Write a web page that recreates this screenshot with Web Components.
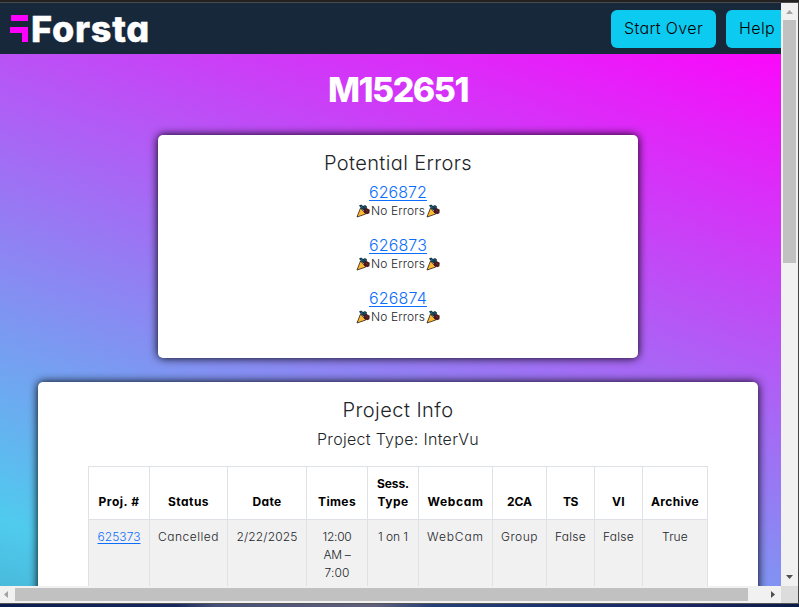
<!DOCTYPE html>
<html lang="en"><head><meta charset="utf-8"><title>Forsta</title>
<style>
html,body{margin:0;height:100%;overflow:hidden}
body{font-family:Inter,"Open Sans",sans-serif;font-feature-settings:"cv11","ss03";color:#212529;background:#222}
</style></head><body>
<app-window></app-window>
<script>
const define=(name,html,init)=>customElements.define(name,class extends HTMLElement{
  connectedCallback(){
    if(this.shadowRoot)return;
    const t=document.createElement('template');t.innerHTML=html;
    this.attachShadow({mode:'open'}).append(t.content.cloneNode(true));
    if(init)init.call(this,this.shadowRoot);
  }
});
/* Text tracked out to a fixed measure. */
define('fit-text',`<style>:host{display:inline-block;white-space:nowrap;text-align:left}span{display:inline-block;white-space:nowrap}:host([underline]) span{text-decoration:underline;text-decoration-thickness:1px;text-underline-offset:2px;text-decoration-skip-ink:none}</style><span></span>`,function(r){
  const s=r.querySelector('span'),txt=this.getAttribute('text'),w=+this.getAttribute('w');
  s.textContent=txt;
  const n=s.getBoundingClientRect().width;
  s.style.letterSpacing=((w-n)/txt.length)+'px';
  this.style.width=w+'px';
});
define('party-icon',`<style>:host{display:inline-block;width:14px;height:14px}svg{display:block}</style>
<svg width="14" height="14" viewBox="0 0 14 14"><path d="M4.5 4 9.8 10 1 13z" fill="#fdb833" stroke="#2b1c12" stroke-width=".8" stroke-linejoin="round"/><path d="M3 1.4 5.2.6 7 2 9 1l2 1.4-.4 2.3L8 6.6 5.4 5z" fill="#153b4c"/><path d="M7.6 5.5 10.5 4l3.2 1.8-.3 3.4-2.4 1L8 8.4z" fill="#48191c"/><path d="M5 2.5l1.4 1M8.6 2.6l.9.7" stroke="#2f7f9b"/><path d="M10 6.4l1.7 1" stroke="#8c2e2b"/></svg>`);
define('forsta-logo',`<style>:host{display:flex;align-items:flex-start;color:#fff}svg{display:block;margin-top:6px}fit-text{font-size:36px;line-height:36px;font-weight:800;margin-left:3px;margin-top:2px;-webkit-text-stroke:.4px #fff}</style>
<svg width="18" height="28" viewBox="0 0 18 28"><path d="M1 0h17v6H1zM0 12h18v15h-6v-9H0z" fill="#f0f"/></svg><fit-text text="Forsta" w="119"></fit-text>`);
define('nav-button',`<style>:host{display:flex;box-sizing:border-box;height:38px;padding:0 13px 2px;align-items:center;border-radius:6px;background:#0dcaf0;color:#000;font-size:16px;font-weight:350;flex:none}</style><slot></slot>`);
define('nav-bar',`<style>:host{display:flex;height:51px;box-sizing:border-box;padding:7px 0 0 10px;background:#17283b;overflow:hidden}forsta-logo{flex:1;margin-top:-1px}nav{display:flex;gap:10px;margin-right:-7px}</style>
<forsta-logo></forsta-logo><nav><nav-button><fit-text text="Start Over" w="79"></fit-text></nav-button><nav-button><fit-text text="Help" w="36"></fit-text></nav-button></nav>`);
define('info-card',`<style>:host{display:block;box-sizing:border-box;background:#fff;border-radius:5px;box-shadow:0 0 10px #000;text-align:center;font-weight:350}h2{margin:0;font-size:20px;line-height:24px;font-weight:350}</style><h2><slot name="title"></slot></h2><slot></slot>`);
define('error-entry',`<style>:host{display:block;height:53px}a{display:block;color:#0d6efd;line-height:20px;height:20px;font-size:16px}a fit-text{height:20px}p{display:flex;justify-content:center;gap:1px;margin:0;height:17px;font-size:12px;line-height:17px}party-icon{margin-top:2px}</style><a></a><p><party-icon></party-icon><fit-text text="No Errors" w="54"></fit-text><party-icon></party-icon></p>`,function(r){
  r.querySelector('a').innerHTML='<fit-text underline w="58" text="'+this.getAttribute('num')+'"></fit-text>';
});
const cols=[['Proj. #',61,41,'625373',43],['Status',78,41,'Cancelled',61],['Date',79,29,'2/22/2025',61],['Times',61,38,'12:00|AM –|7:00','29|27|25'],['Sess.|Type',51,'32|31','1 on 1',30],['Webcam',74,56,'WebCam',57],['2CA',54,25,'Group',37],['TS',48,15,'False',31],['VI',48,13,'False',31],['Archive',65,48,'True',26]];
const lines=(t,w,u='')=>{const ws=String(w).split('|');return t.split('|').map((x,i)=>`<div><fit-text ${u} text="${x}" w="${ws[i]}"></fit-text></div>`).join('')};
define('project-table',`<style>:host{display:block;width:620px}table{border-collapse:collapse;table-layout:fixed;width:620px;font-size:12px;line-height:18px}th,td{border:1px solid #dee2e6;padding:8px 0;text-align:center;vertical-align:bottom;color:#000;box-sizing:border-box}th{font-weight:700}td{vertical-align:top;background:#f1f1f1;font-weight:350;height:90px;color:#212529}div{height:18px}a{color:#0d6efd}</style><table></table>`,function(r){
  r.querySelector('table').innerHTML='<colgroup>'+cols.map(c=>`<col style="width:${c[1]}px">`).join('')+'</colgroup><tr>'+cols.map(c=>`<th>${lines(c[0],c[2])}</th>`).join('')+'</tr><tr>'+cols.map((c,i)=>`<td>${i?lines(c[3],c[4]):'<a>'+lines(c[3],c[4],'underline')+'</a>'}</td>`).join('')+'</tr>';
});
define('project-page',`<style>:host{display:flex;flex-direction:column;overflow:hidden;height:532px;align-items:center;box-sizing:border-box;padding:16px 0 0 0;background:linear-gradient(200deg,#fb08fb 0,#4fcbee 705px,#17283b 1310px)}
main{display:flex;flex-direction:column;align-items:center;width:796px;align-self:flex-start;flex:none}h1{margin:0;height:40px;line-height:40px;font-size:34px;font-weight:800;color:#fff}
.errors{width:480px;height:223px;margin-top:25px;padding-top:16px}.list{padding-top:7px}.project{width:720px;height:400px;margin-top:24px;padding-top:16px}.type{height:24px;line-height:24px;font-size:16px;padding:5px 0 15px}project-table{margin:0 auto}</style>
<main><h1><fit-text text="M152651" w="140"></fit-text></h1>
<info-card class="errors"><fit-text slot="title" text="Potential Errors" w="148"></fit-text><div class="list"><error-entry num="626872"></error-entry><error-entry num="626873"></error-entry><error-entry num="626874"></error-entry></div></info-card>
<info-card class="project"><fit-text slot="title" text="Project Info" w="111"></fit-text><div class="type"><fit-text text="Project Type: InterVu" w="162"></fit-text></div><project-table></project-table></info-card></main>`);
define('scroll-bar',`<style>:host{display:flex;background:#f1f1f1;box-sizing:border-box}:host([dir=v]){flex-direction:column;width:17px;height:583px;padding:0 2px}:host([dir=h]){width:781px;height:17px;padding:2px 0}svg{flex:none;display:block}i{background:#c1c1c1}b{flex:1}:host([dir=v]) i{height:243px;width:13px}:host([dir=h]) i{width:733px;height:13px}</style><slot></slot>`,function(r){
  const v=this.getAttribute('dir')==='v';
  r.innerHTML+=v?`<svg width="13" height="17"><path d="M3 11 6.5 7 10 11z" fill="#a3a3a3"/></svg><i></i><b></b><svg width="13" height="17"><path d="M3 6h7L6.5 10z" fill="#505050"/></svg>`:`<svg width="15" height="13"><path d="M8 3v7L4 6.5z" fill="#a3a3a3"/></svg><i></i><b></b><svg width="17" height="13"><path d="M7 3v7l4-3.5z" fill="#505050"/></svg>`;
});
define('app-window',`<style>:host{display:grid;width:799px;height:607px;grid-template:3px 583px 17px 4px / 781px 17px 1px;background:#444}
.top{grid-column:1/4;background:#222;border-bottom:1px solid #4a4a4a}.view{overflow:hidden}.edge{grid-column:3;grid-row:2/4;background:#444}.corner{background:#dcdcdc}
.below{grid-column:1/4;border-top:1px solid #555;background:linear-gradient(90deg,#0b1c50,#16275e 22%,#454f78 27%,#60607c 47%,#253f78 54%,#17306c 72%,#1d2566 85%,#091b46)}</style>
<div class="top"></div><div class="view"><nav-bar></nav-bar><project-page></project-page></div><scroll-bar dir="v"></scroll-bar><div class="edge"></div><scroll-bar dir="h"></scroll-bar><div class="corner"></div><div class="below"></div>`);
</script></body></html>
